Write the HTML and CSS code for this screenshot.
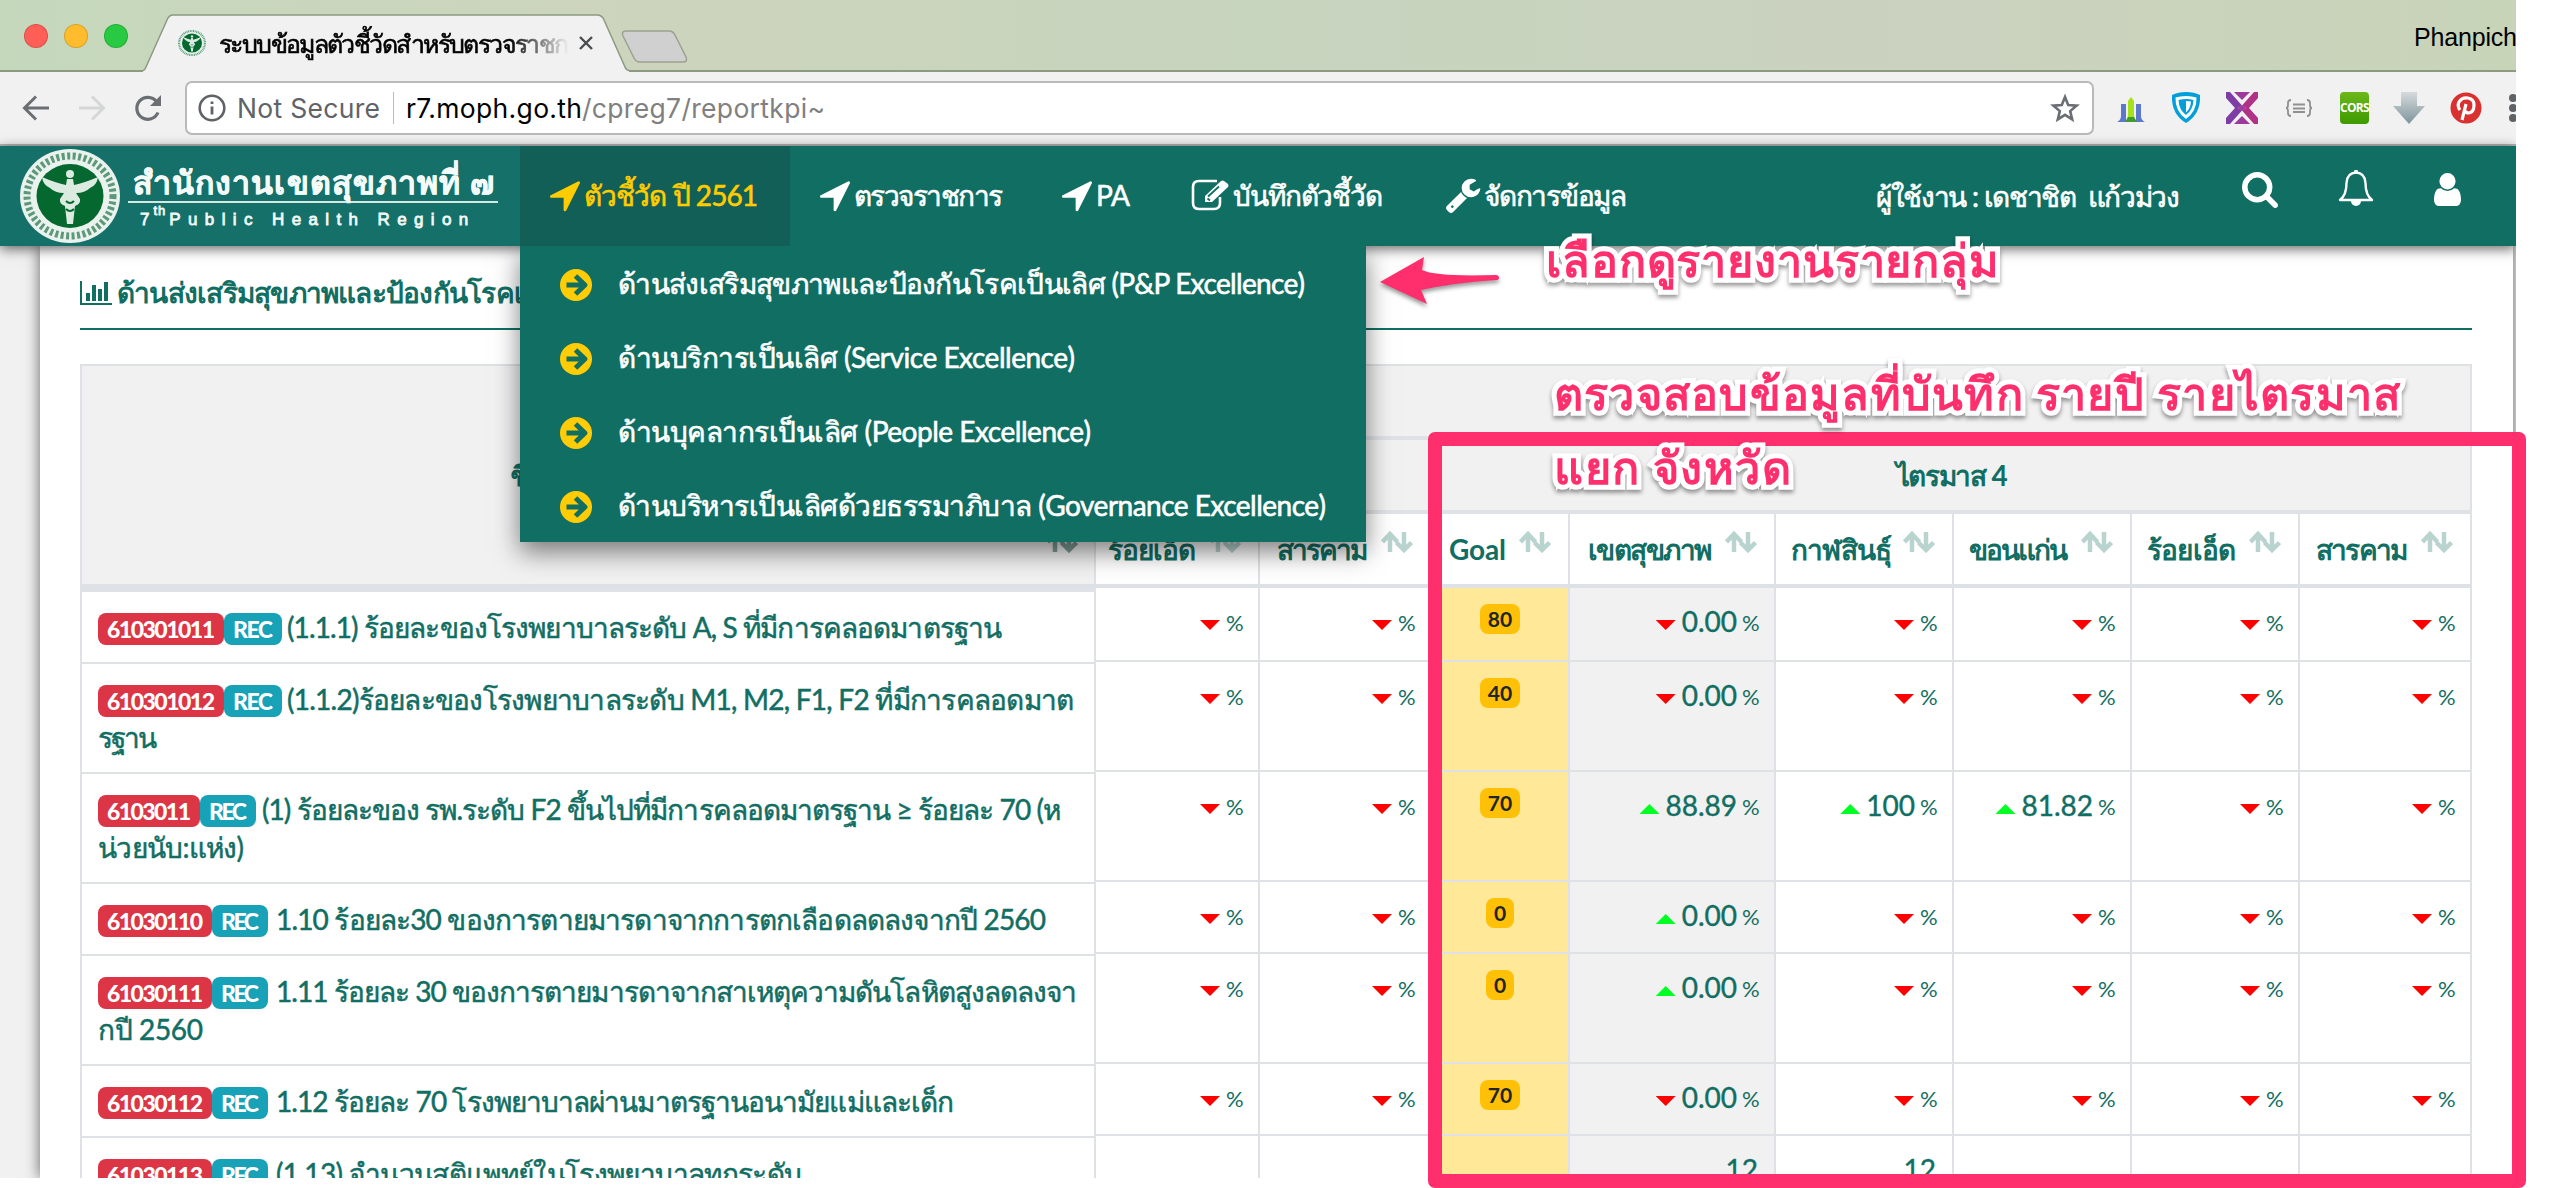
FILE: index.html
```html
<!DOCTYPE html>
<html lang="th">
<head>
<meta charset="utf-8">
<title>ระบบข้อมูลตัวชี้วัดสำหรับตรวจราชการ</title>
<link rel="stylesheet" href="styles.css">
</head>
<body>
<svg width="0" height="0" class="defs">
  <symbol id="loc" viewBox="192 128 1408 1536"><path d="M1593 349l-640 1280q-17 35-57 35-5 0-15-2-22-5-35.500-22.500t-13.500-39.500v-576h-576q-22 0-39.500-13.500t-22.500-35.500 4-42 29-30l1280-640q13-7 29-7 27 0 45 19 15 14 18.500 34.500t-6.500 39.500z"/></symbol>
  <symbol id="go" viewBox="0 0 32 32"><circle cx="16" cy="16" r="16" fill="#ffcc05"/><path d="M6.500 16H25M15.500 7l9.500 9-9.500 9" fill="none" stroke="#116e63" stroke-width="5" stroke-linejoin="round"/></symbol>
  <symbol id="sort" viewBox="0 0 32 22"><path d="M9 21V3M1.500 11L9 3l7.500 8M23 1v18M15.500 11.500L23 19l7.500-7.500" fill="none" stroke="currentColor" stroke-width="4.500"/></symbol>
  <symbol id="seal" viewBox="0 0 100 94"><ellipse cx="50" cy="47" rx="50" ry="47" fill="#e9f2ec"/><ellipse cx="50" cy="47" rx="43" ry="40" fill="none" stroke="#2d7a55" stroke-width="7" stroke-dasharray="3 2.500" opacity=".75"/><ellipse cx="50" cy="47" rx="33.500" ry="32" fill="#05682f"/><path d="M47 30h6l1 6q10-2 24-8-1 8-8 11-5 5-14 5l4 6q1 5-5 7l-2 18h-6l-2-18q-6-2-5-7l4-6q-9 0-14-5-7-3-8-11 14 6 24 8z" fill="#dcebe0"/><circle cx="50" cy="25" r="4" fill="#dcebe0"/><path d="M46 52q4 4 8 0M46 60q4 4 8 0" stroke="#05682f" stroke-width="2" fill="none"/></symbol>
</svg>

<div class="window">
  <header class="tabs">
    <div class="lights"><i class="l1"></i><i class="l2"></i><i class="l3"></i></div>
    <div class="tab">
      <svg class="tab-shape" width="486" height="58" viewBox="0 0 486 58"><path d="M0 56.500Q2 56 3 53L24 6Q26 1 30 1H454Q459 1 461 6L482 53Q483 56 486 56.500V58H0z" fill="#f1f1f1"/><path d="M0 56.500Q2 56 3 53L24 6Q26 1 30 1H454Q459 1 461 6L482 53Q483 56 486 56.500" fill="none" stroke="#8c9a80" stroke-width="1.500"/></svg>
      <svg class="favicon" width="30" height="30"><use href="#seal"/></svg>
      <span class="tab-title"><b data-w="350">ระบบข้อมูลตัวชี้วัดสำหรับตรวจราชก</b></span>
      <svg class="close" width="14" height="14" viewBox="0 0 14 14"><path d="M1 1l12 12M13 1L1 13" stroke="#4a4d50" stroke-width="2.400"/></svg>
    </div>
    <svg class="newtab" width="68" height="34" viewBox="0 0 68 34"><path d="M5 1H48Q52 1 54 5L65 27Q67 32 62 32H19Q15 32 13 28L2 6Q0 1 5 1z" fill="#d0d0d0" stroke="#9aa18f" stroke-width="1.500"/></svg>
    <span class="profile" data-w="103">Phanpich</span>
  </header>

  <div class="toolbar">
    <svg class="tb-back" width="26" height="26" viewBox="0 0 26 26"><path d="M26 13H2M13 1.500L1.500 13 13 24.500" fill="none" stroke="#6b6f74" stroke-width="3"/></svg>
    <svg class="tb-fwd" width="26" height="26" viewBox="0 0 26 26"><path d="M0 13H24M13 1.500L24.500 13 13 24.500" fill="none" stroke="#d5d6d7" stroke-width="3"/></svg>
    <svg class="tb-reload" width="28" height="28" viewBox="0 0 28 28"><path d="M22.500 7.500A11 11 0 1 0 24 18.500" fill="none" stroke="#6b6f74" stroke-width="3.200"/><path d="M27 1V12H16z" fill="#6b6f74"/></svg>
    <div class="omnibox">
      <svg width="28" height="28" viewBox="0 0 28 28"><circle cx="14" cy="14" r="12.300" fill="none" stroke="#5f6368" stroke-width="2.600"/><path d="M14 12.500V20.500M14 7.500V10" stroke="#5f6368" stroke-width="2.800"/></svg>
      <span class="secure" data-w="143">Not Secure</span>
      <span class="url"><b data-w="176">r7.moph.go.th</b><i data-w="243">/cpreg7/reportkpi~</i></span>
      <svg class="star" width="30" height="28" viewBox="0 0 30 28"><path d="M15 3l3.200 8 8.500.600-6.500 5.500 2 8.300L15 20.800 7.800 25.400l2-8.300L3.300 11.600l8.500-.600z" fill="none" stroke="#6b6f74" stroke-width="2.600"/></svg>
    </div>
    <div class="exts">
      <svg width="30" height="32" viewBox="0 0 30 32"><path d="M1 30q4-2 4-6V12h5v18zM29 30q-4-2-4-6V12h-5v18z" fill="#5b78cc"/><path d="M10 30q2-3 2-8V9l3-4 3 4v13q0 5 2 8z" fill="#a4e01c"/><path d="M9 30l3-5h6l3 5z" fill="#3f9b2c"/></svg>
      <svg width="30" height="32" viewBox="0 0 30 32"><path d="M15 0q8 0 14 3 1 19-14 28Q0 22 1 3 7 0 15 0z" fill="#049fdb"/><path d="M15 4q6 0 10.500 1.500Q26 19 15 27 4 19 4.500 5.500 9 4 15 4z" fill="#fff"/><path d="M15 7q4.500 0 7.500 1-.5 10-7.500 15Q8 18 7.500 8 11 7 15 7z" fill="#049fdb"/><path d="M15 9q3 0 5 .5-.5 7-5 11z" fill="#fff"/></svg>
      <svg width="32" height="32" viewBox="0 0 32 32"><path d="M0 0H4L16 13.500 12 16 16 18.500 4 32H0V26L9 16 0 6z" fill="#7f3ca6"/><path d="M32 0H28L16 13.500 20 16 16 18.500 28 32H32V26L23 16 32 6z" fill="#b03286"/><path d="M8 0H24L16 8zM8 32H24L16 24z" fill="#9c3b9c"/><path d="M12 16l4-3 4 3-4 3z" fill="#9c3b9c"/></svg>
      <svg width="28" height="18" viewBox="0 0 28 18"><path d="M6 1Q3 1 3 4v2q0 3-2 3 2 0 2 3v2q0 3 3 3M22 1q3 0 3 3v2q0 3 2 3-2 0-2 3v2q0 3-3 3M8 5.500H20M8 9.500H20M8 13H20" fill="none" stroke="#909090" stroke-width="1.800"/></svg>
      <span class="cors">CORS</span>
      <svg width="32" height="32" viewBox="0 0 32 32"><defs><linearGradient id="g" x2="0" y2="1"><stop offset="0" stop-color="#d5dadd"/><stop offset="1" stop-color="#7f949c"/></linearGradient></defs><path d="M8 0H24V14h8L16 32 0 14h8z" fill="url(#g)"/></svg>
      <svg width="32" height="32" viewBox="0 0 32 32"><circle cx="16" cy="16" r="15.500" fill="#d93030"/><path d="M10 18q-3-4-1-8 3-5 9-4 6 1 6 7 0 7-5 8-3 0-4-2M16 12l-4 16" fill="none" stroke="#fff" stroke-width="3.200"/></svg>
      <svg class="dots" width="8" height="28" viewBox="0 0 8 28"><path d="M4 0a4 4 0 0 1 0 8 4 4 0 0 1 0-8zM4 10a4 4 0 0 1 0 8 4 4 0 0 1 0-8zM4 20a4 4 0 0 1 0 8 4 4 0 0 1 0-8z" fill="#5f6368"/></svg>
    </div>
  </div>

  <div class="viewport">
    <nav class="nav">
      <div class="brand">
        <svg width="100" height="94"><use href="#seal"/></svg>
        <div class="brand-text">
          <div class="brand-th"><span data-w="361">สำนักงานเขตสุขภาพที่ ๗</span></div>
          <div class="brand-en">7<sup>th</sup><span data-w="299">Public Health Region</span></div>
        </div>
      </div>
      <div class="item active n1"><svg width="30" height="38"><use href="#loc"/></svg><span data-w="174">ตัวชี้วัด ปี 2561</span></div>
      <div class="item n2"><svg width="30" height="38"><use href="#loc"/></svg><span data-w="149">ตรวจราชการ</span></div>
      <div class="item n3"><svg width="30" height="38"><use href="#loc"/></svg><span data-w="34">PA</span></div>
      <div class="item n4"><svg width="38" height="32" viewBox="0 0 38 32"><path d="M29 18v6q0 6-6 6H8q-6 0-6-6V8q0-6 6-6h18" fill="none" stroke="#fff" stroke-width="2.600"/><path d="M14 23v-6L30 2q2-1 3 0l4 3q1 2 0 3L21 23z" fill="#fff"/><path d="M17 17.500L28 7.500M16.500 19.500l2.500 2" stroke="#116e63" stroke-width="1.800"/></svg><span data-w="150">บันทึกตัวชี้วัด</span></div>
      <div class="item n5"><svg width="36" height="35" viewBox="64 96 1664 1680"><path d="M448 1472q0-26-19-45t-45-19-45 19-19 45 19 45 45 19 45-19 19-45zm644-420l-682 682q-37 37-90 37-52 0-91-37l-106-108q-38-36-38-90 0-53 38-91l681-681q39 98 114.500 173.500t173.500 114.500zm634-435q0 39-23 106-47 134-164.500 217.500t-258.500 83.500q-185 0-316.500-131.500t-131.500-316.500 131.500-316.500 316.500-131.500q58 0 121.500 16.500t107.500 46.500q16 11 16 28t-16 28l-293 169v224l193 107q5-3 79-48.500t135.500-81 70.500-35.500q15 0 23.500 10t8.500 25z" fill="#fff"/></svg><span data-w="143">จัดการข้อมูล</span></div>
      <div class="user"><span data-w="304">ผู้ใช้งาน : เดชาชิต&nbsp; แก้วม่วง</span></div>
      <svg class="ic-search" width="36" height="36" viewBox="64 128 1664 1664"><path d="M1216 832q0-185-131.500-316.500t-316.500-131.500-316.500 131.500-131.500 316.500 131.500 316.500 316.500 131.500 316.500-131.500 131.500-316.500zm512 832q0 52-38 90t-90 38q-54 0-90-38l-343-342q-179 124-399 124-143 0-273.500-55.500t-225-150-150-225-55.500-273.500 55.500-273.500 150-225 225-150 273.500-55.500 273.500 55.500 225 150 150 225 55.500 273.500q0 220-124 399l343 343q37 37 37 90z" fill="#fff"/></svg>
      <svg class="ic-bell" width="36" height="38" viewBox="0 0 36 38"><path d="M18 3.500Q9 4 8.500 14 8.500 26 2 31H34Q27.500 26 27.500 14 27 4 18 3.500z" fill="none" stroke="#fff" stroke-width="2.400" stroke-linejoin="round"/><path d="M18 1v3" stroke="#fff" stroke-width="3.500"/><path d="M13 32a5 5 0 0 0 10 0z" fill="#fff"/></svg>
      <svg class="ic-user" width="27" height="33" viewBox="256 128 1280 1536" preserveAspectRatio="none"><path d="M1536 1399q0 109-62.500 187t-150.500 78h-854q-88 0-150.500-78t-62.500-187q0-85 8.500-160.500t31.500-152 58.500-131 94-89 134.500-34.500q131 128 313 128t313-128q76 0 134.500 34.500t94 89 58.500 131 31.500 152 8.500 160.500zm-256-887q0 159-112.500 271.500t-271.500 112.500-271.500-112.500-112.500-271.500 112.500-271.500 271.500-112.500 271.500 112.500 112.500 271.500z" fill="#fff"/></svg>
    </nav>

    <div class="menu">
      <div class="menu-row"><svg width="32" height="32"><use href="#go"/></svg><span data-w="687">ด้านส่งเสริมสุขภาพและป้องกันโรคเป็นเลิศ (P&amp;P Excellence)</span></div>
      <div class="menu-row"><svg width="32" height="32"><use href="#go"/></svg><span data-w="457">ด้านบริการเป็นเลิศ (Service Excellence)</span></div>
      <div class="menu-row"><svg width="32" height="32"><use href="#go"/></svg><span data-w="473">ด้านบุคลากรเป็นเลิศ (People Excellence)</span></div>
      <div class="menu-row"><svg width="32" height="32"><use href="#go"/></svg><span data-w="708">ด้านบริหารเป็นเลิศด้วยธรรมาภิบาล (Governance Excellence)</span></div>
    </div>

    <main class="card">
      <h1 class="title"><svg width="32" height="24" viewBox="0 0 32 24"><path d="M0 0h2v22h30v2H0zM6 12h4v8H6zM12 4h4v16h-4zM18 8h4v12h-4zM24 1h4v19h-4z" fill="#116e63"/></svg><span data-w="686">ด้านส่งเสริมสุขภาพและป้องกันโรคเป็นเลิศ (P&amp;P Excellence)</span></h1>
      <div class="table">
        <section class="names">
          <div class="names-head"><span data-w="156">ชื่อตัวชี้วัด</span><svg class="sort dark" width="32" height="22"><use href="#sort"/></svg></div>
          <div class="name h1r"><b class="red" data-w="108">610301011</b><b class="rec" data-w="40">REC</b><span class="t6" data-w="715">(1.1.1) ร้อยละของโรงพยาบาลระดับ A, S ที่มีการคลอดมาตรฐาน</span></div>
          <div class="name h2r"><b class="red" data-w="108">610301012</b><b class="rec" data-w="40">REC</b><span class="t6" data-w="787">(1.1.2)ร้อยละของโรงพยาบาลระดับ M1, M2, F1, F2 ที่มีการคลอดมาต</span><br><span data-w="59">รฐาน</span></div>
          <div class="name h2r"><b class="red" data-w="84">6103011</b><b class="rec" data-w="38">REC</b><span class="t7" data-w="799">(1) ร้อยละของ รพ.ระดับ F2 ขึ้นไปที่มีการคลอดมาตรฐาน ≥ ร้อยละ 70 (ห</span><br><span data-w="146">น่วยนับ:แห่ง)</span></div>
          <div class="name h1r"><b class="red" data-w="96">61030110</b><b class="rec" data-w="38">REC</b><span class="t8" data-w="770">1.10 ร้อยละ30 ของการตายมารดาจากการตกเลือดลดลงจากปี 2560</span></div>
          <div class="name h2r"><b class="red" data-w="96">61030111</b><b class="rec" data-w="38">REC</b><span class="t8" data-w="801">1.11 ร้อยละ 30 ของการตายมารดาจากสาเหตุความดันโลหิตสูงลดลงจา</span><br><span data-w="105">กปี 2560</span></div>
          <div class="name h1r"><b class="red" data-w="96">61030112</b><b class="rec" data-w="38">REC</b><span class="t8" data-w="678">1.12 ร้อยละ 70 โรงพยาบาลผ่านมาตรฐานอนามัยแม่และเด็ก</span></div>
          <div class="name h1r"><b class="red" data-w="96">61030113</b><b class="rec" data-w="38">REC</b><span class="t8" data-w="526">(1.13) จำนวนสูติแพทย์ในโรงพยาบาลทุกระดับ</span></div>
        </section>
        <section class="values" id="values">
          <div class="band band1"></div>
          <div class="band band2"><span data-w="112">ไตรมาส 4</span></div>
          <div class="grid heads">
            <div><span data-w="88">ร้อยเอ็ด</span><svg class="sort" width="32" height="22"><use href="#sort"/></svg></div>
            <div><span data-w="91">สารคาม</span><svg class="sort" width="32" height="22"><use href="#sort"/></svg></div>
            <div><span data-w="57">Goal</span><svg class="sort" width="32" height="22"><use href="#sort"/></svg></div>
            <div><span data-w="124">เขตสุขภาพ</span><svg class="sort" width="32" height="22"><use href="#sort"/></svg></div>
            <div class="tight"><span data-w="101">กาฬสินธุ์</span><svg class="sort" width="32" height="22"><use href="#sort"/></svg></div>
            <div><span data-w="99">ขอนแก่น</span><svg class="sort" width="32" height="22"><use href="#sort"/></svg></div>
            <div><span data-w="89">ร้อยเอ็ด</span><svg class="sort" width="32" height="22"><use href="#sort"/></svg></div>
            <div><span data-w="92">สารคาม</span><svg class="sort" width="32" height="22"><use href="#sort"/></svg></div>
          </div>
        </section>
      </div>
    </main>
  </div>
</div>

<div class="frame"></div>
<svg class="arrow" width="130" height="56" viewBox="0 0 130 56"><path d="M3 30L47 5 45 18Q60 25 119 23 122 23 122 26 122 28 119 28 75 31 44 38L50 52z" fill="#ff2f6d"/></svg>
<div class="note note1"><span data-w="453">เลือกดูรายงานรายกลุ่ม</span></div>
<div class="note note2"><span data-w="846">ตรวจสอบข้อมูลที่บันทึก รายปี รายไตรมาส</span></div>
<div class="note note3"><span data-w="237">แยก จังหวัด</span></div>
<script src="app.js"></script>
</body>
</html>
```
FILE: styles.css
```css
*{box-sizing:border-box}
body{margin:0;width:2568px;height:1188px;overflow:hidden;background:#fff;position:relative;font-family:Lato,sans-serif;font-size:28px;line-height:38px;color:#116e63}
svg{display:block;flex:none;overflow:visible}
i{font-style:normal}
.defs{position:absolute}
[data-w]{display:inline-block;white-space:nowrap;flex:none}

.window{width:2516px;height:1178px;overflow:hidden;background:#f1f1f1;display:flex;flex-direction:column}
.tabs{height:72px;flex:none;display:flex;align-items:flex-start;background:linear-gradient(90deg,#c5d8bc,#cdd4bd 25%,#c7d4be 50%,#cbd2bf 78%,#c8d4b8);border-bottom:2px solid #8c9a80}
.lights{display:flex;gap:16px;padding:24px 0 0 24px;width:143px}
.lights i{width:24px;height:24px;border-radius:50%;border:1px solid rgba(0,0,0,.15)}
.l1{background:#ff5f57}.l2{background:#ffbd2e}.l3{background:#28ca42}
.tab{width:486px;height:58px;margin-top:14px;display:grid;grid-template-columns:34px 30px 12px 350px 10px 14px;align-items:center}
.tab-shape{grid-area:1/1/2/7;align-self:start}
.favicon{grid-area:1/2}
.tab-title{grid-area:1/4;overflow:hidden;height:44px;line-height:44px;font-size:25px;color:#000;-webkit-mask:linear-gradient(90deg,#000 83%,transparent);mask:linear-gradient(90deg,#000 83%,transparent)}
.tab-title b{font-weight:400;-webkit-text-stroke:.6px #000}
.close{grid-area:1/6}
.newtab{margin:30px 0 0 -8px}
.profile{margin:20px -1px 0 auto;font:25px/34px "Liberation Sans",sans-serif;color:#000}

.toolbar{height:74px;flex:none;display:flex;align-items:center;padding-left:23px;border-bottom:2px solid #b5b5b5;background:#f1f1f1}
.tb-fwd{margin-left:30px}
.tb-reload{margin-left:29px}
.omnibox{margin-left:23px;width:1911px;height:54px;border:2px solid #b9b9b9;border-radius:7px;background:#fff;display:flex;align-items:center;padding-left:11px;font:26.5px/50px Inter,sans-serif}
.secure{margin-left:11px;color:#5f6368}
.url{margin-left:13px;border-left:1px solid #bbb;height:32px;line-height:32px;padding-left:12px;display:flex}
.url b{font-weight:400;color:#000}.url i{color:#808080}
.star{margin:0 12px 0 auto}
.exts{display:flex;align-items:center;margin-left:22px;width:400px}
.exts>*{margin-right:25px}
.exts>:nth-child(3),.exts>:nth-child(4){margin-right:27px}
.exts .cors{width:32px;height:32px;border-radius:4px;background:linear-gradient(#6cb81a,#3d9a00);color:#fff;font:700 12px/32px "Open Sans",sans-serif;text-align:center;letter-spacing:-.7px;margin-right:24px}
.exts .dots{margin:0 0 0 2px}

.viewport{position:relative;flex:1;isolation:isolate}
.nav{position:relative;z-index:3;height:100px;background:#116e63;display:flex;align-items:center;color:#fff;box-shadow:0 3px 12px rgba(0,0,0,.6)}
.brand{width:520px;height:100px;padding-left:20px;display:flex;align-items:center;background:#15706a;color:#f3faf8}
.brand-text{margin-left:8px;width:370px}
.brand-th{height:47px;padding-left:5px;font-size:32px;line-height:52px;font-weight:700;border-bottom:2px solid #d6e8e4;margin-top:-4px;-webkit-text-stroke:.5px}
.brand-en{font:17px/24px "Liberation Sans",sans-serif;-webkit-text-stroke:.8px;padding:5px 0 0 12px;display:flex}
.brand-en sup{font-size:13px;line-height:10px;letter-spacing:1px;margin:-2px 3px 0 4px;vertical-align:baseline}
.item{height:100px;padding:0 0 2px 30px;display:flex;align-items:center;gap:4px;-webkit-text-stroke:.6px}
.item use{stroke:none;fill:#fff}
.active{background:#125f57;color:#fc0}
.active use{fill:#fc0}
.n1{width:270px}.n2{width:242px}.n3{width:129px}.n4{width:254px}.n5{width:461px;gap:3px}
.user{width:367px;-webkit-text-stroke:.6px}
.ic-search{margin-top:-12px;margin-left:-1px}
.ic-bell{margin:-16px 0 0 60px}
.ic-user{margin:-14px 0 0 60px}

.menu{position:absolute;z-index:4;left:520px;top:100px;width:846px;background:#116e63;color:#fff;box-shadow:0 10px 24px rgba(0,0,0,.5);clip-path:inset(0 -60px -80px -60px)}
.menu-row{height:74px;padding:0 0 0 40px;display:flex;align-items:center;gap:26px;-webkit-text-stroke:.6px}
.menu-row svg{margin-top:3px}

.card{margin-left:40px;width:2473px;height:932px;background:#fff;box-shadow:0 0 14px rgba(0,0,0,.6);padding:0 41px 0 40px}
.title{margin:0;height:84px;border-bottom:2px solid #116e63;font-size:28px;font-weight:700;display:flex;align-items:center;gap:5px;padding-top:9px}
.title svg{margin-top:2px}
.table{margin-top:34px;display:flex;height:830px}
.names{width:1016px;border:2px solid #dee2e6;border-bottom:0}
.names-head{height:226px;border-bottom:8px solid #dee2e6;background:#f1f1f1;display:grid;grid-template-columns:1fr;align-items:center;justify-items:center;font-weight:700}
.names-head>*{grid-area:1/1}
.names-head .sort{justify-self:end;align-self:end;margin:0 16px 31px 0}
.name{border-bottom:2px solid #dee2e6;padding:16px 0 0 16px;white-space:nowrap;-webkit-text-stroke:.5px}
.h1r{height:72px}.h2r{height:110px}
.red,.rec{font-size:23px;line-height:32px;font-weight:900;color:#fff;border-radius:8px;padding:0 9px;background:#dc3545;box-sizing:content-box;-webkit-text-stroke:0}
.rec{background:#17a2b8}
.t6{margin-left:5px}.t7{margin-left:6px}.t8{margin-left:8px}

.values{width:1376px;border-top:2px solid #dee2e6}
.band{background:#f1f1f1;border-right:2px solid #dee2e6;border-bottom:4px solid #dee2e6}
.band1{height:74px}
.band2{height:74px;padding-left:336px;text-align:center;line-height:70px;font-weight:700}
.grid{display:grid;grid-template-columns:164px 172px 138px 206px 178px 178px 168px 172px}
.grid>div{border-right:2px solid #dee2e6;border-bottom:2px solid #dee2e6;display:flex;justify-content:flex-end}
.heads>div{height:74px;border-bottom-width:4px;align-items:center;gap:13px;padding-right:17px;font-weight:700}
.heads .tight{gap:11px}
.sort{color:#b9d4cf;margin-top:-15px}
.sort.dark{color:#7f9d98}
.v1>div{height:72px}.v2>div{height:110px}.v0>div{height:74px}
.cell{padding:14px 16px 0 0;gap:5px;align-items:flex-start;-webkit-text-stroke:.4px}
.pct{font-size:22px;line-height:42px;width:16px;-webkit-text-stroke:0}
.tri{width:20px;height:10px;margin-top:18px;margin-right:1px;background:red;clip-path:polygon(0 0,100% 0,50% 100%)}
.up{background:#0f2;clip-path:polygon(50% 0,100% 100%,0 100%)}
.gray{background:#f1f1f1}
.grid>.goal{background:#ffe999;justify-content:center;align-items:flex-start;padding-top:16px}
.goal b{height:30px;line-height:30px;font-size:21px;padding:0 8px;border-radius:8px;background:#ffc107;color:#212529}

.frame{position:absolute;left:1428px;top:432px;width:1098px;height:756px;border:14px solid #ff2f6d;border-radius:7px}
.arrow{position:absolute;left:1377px;top:252px;filter:drop-shadow(0 3px 2px rgba(0,0,0,.4))}
.note{position:absolute;font-size:45px;font-weight:700;line-height:60px;color:#ff2f6d;-webkit-text-stroke:10px #fff;paint-order:stroke fill;stroke-linejoin:round;filter:drop-shadow(0 3px 2px rgba(0,0,0,.4))}
.note1{left:1546px;top:230px}
.note2{left:1554px;top:363px}
.note3{left:1554px;top:437px}
```
FILE: app.js
```js
// One entry per indicator row: row class, goal, then the five value cells.
const D = ["d", ""];
const rows = [
  ["v0", "80", ["d", "0.00"], D, D, D, D],
  ["v2", "40", ["d", "0.00"], D, D, D, D],
  ["v2", "70", ["u", "88.89"], ["u", "100"], ["u", "81.82"], D, D],
  ["v1", "0", ["u", "0.00"], D, D, D, D],
  ["v2", "0", ["u", "0.00"], D, D, D, D],
  ["v1", "70", ["d", "0.00"], D, D, D, D],
  ["v1", "", ["", "12"], ["", "12"], ["", ""], ["", ""], ["", ""]]
];
const cell = (c, i) => {
  const tri = c[0] ? `<i class="tri ${c[0] === "u" ? "up" : ""}"></i>` : "";
  const pct = c[0] ? '<i class="pct">%</i>' : "";
  return `<div class="cell ${i === 0 ? "gray" : ""}">${tri}${c[1] ? `<span>${c[1]}</span>` : ""}${pct}</div>`;
};
const values = document.getElementById("values");
rows.forEach(([cls, goal, ...cells]) => {
  const lead = cells[0][0] ? D : ["", ""];
  values.insertAdjacentHTML("beforeend",
    `<div class="grid ${cls}">${cell(lead, 1)}${cell(lead, 1)}<div class="goal">${goal ? `<b>${goal}</b>` : ""}</div>${cells.map(cell).join("")}</div>`);
});

// Space each label's letters so that it fills its intended width.
const widthOf = el => {
  const r = document.createRange();
  r.selectNodeContents(el);
  return r.getBoundingClientRect().width;
};
document.querySelectorAll("[data-w]").forEach(el => {
  const target = +el.dataset.w;
  const w0 = widthOf(el);
  el.style.letterSpacing = "1px";
  const n = widthOf(el) - w0;
  el.style.letterSpacing = n > 1 ? (target - w0) / (n - 1) + "px" : "0";
  el.style.width = target + "px";
});
```
